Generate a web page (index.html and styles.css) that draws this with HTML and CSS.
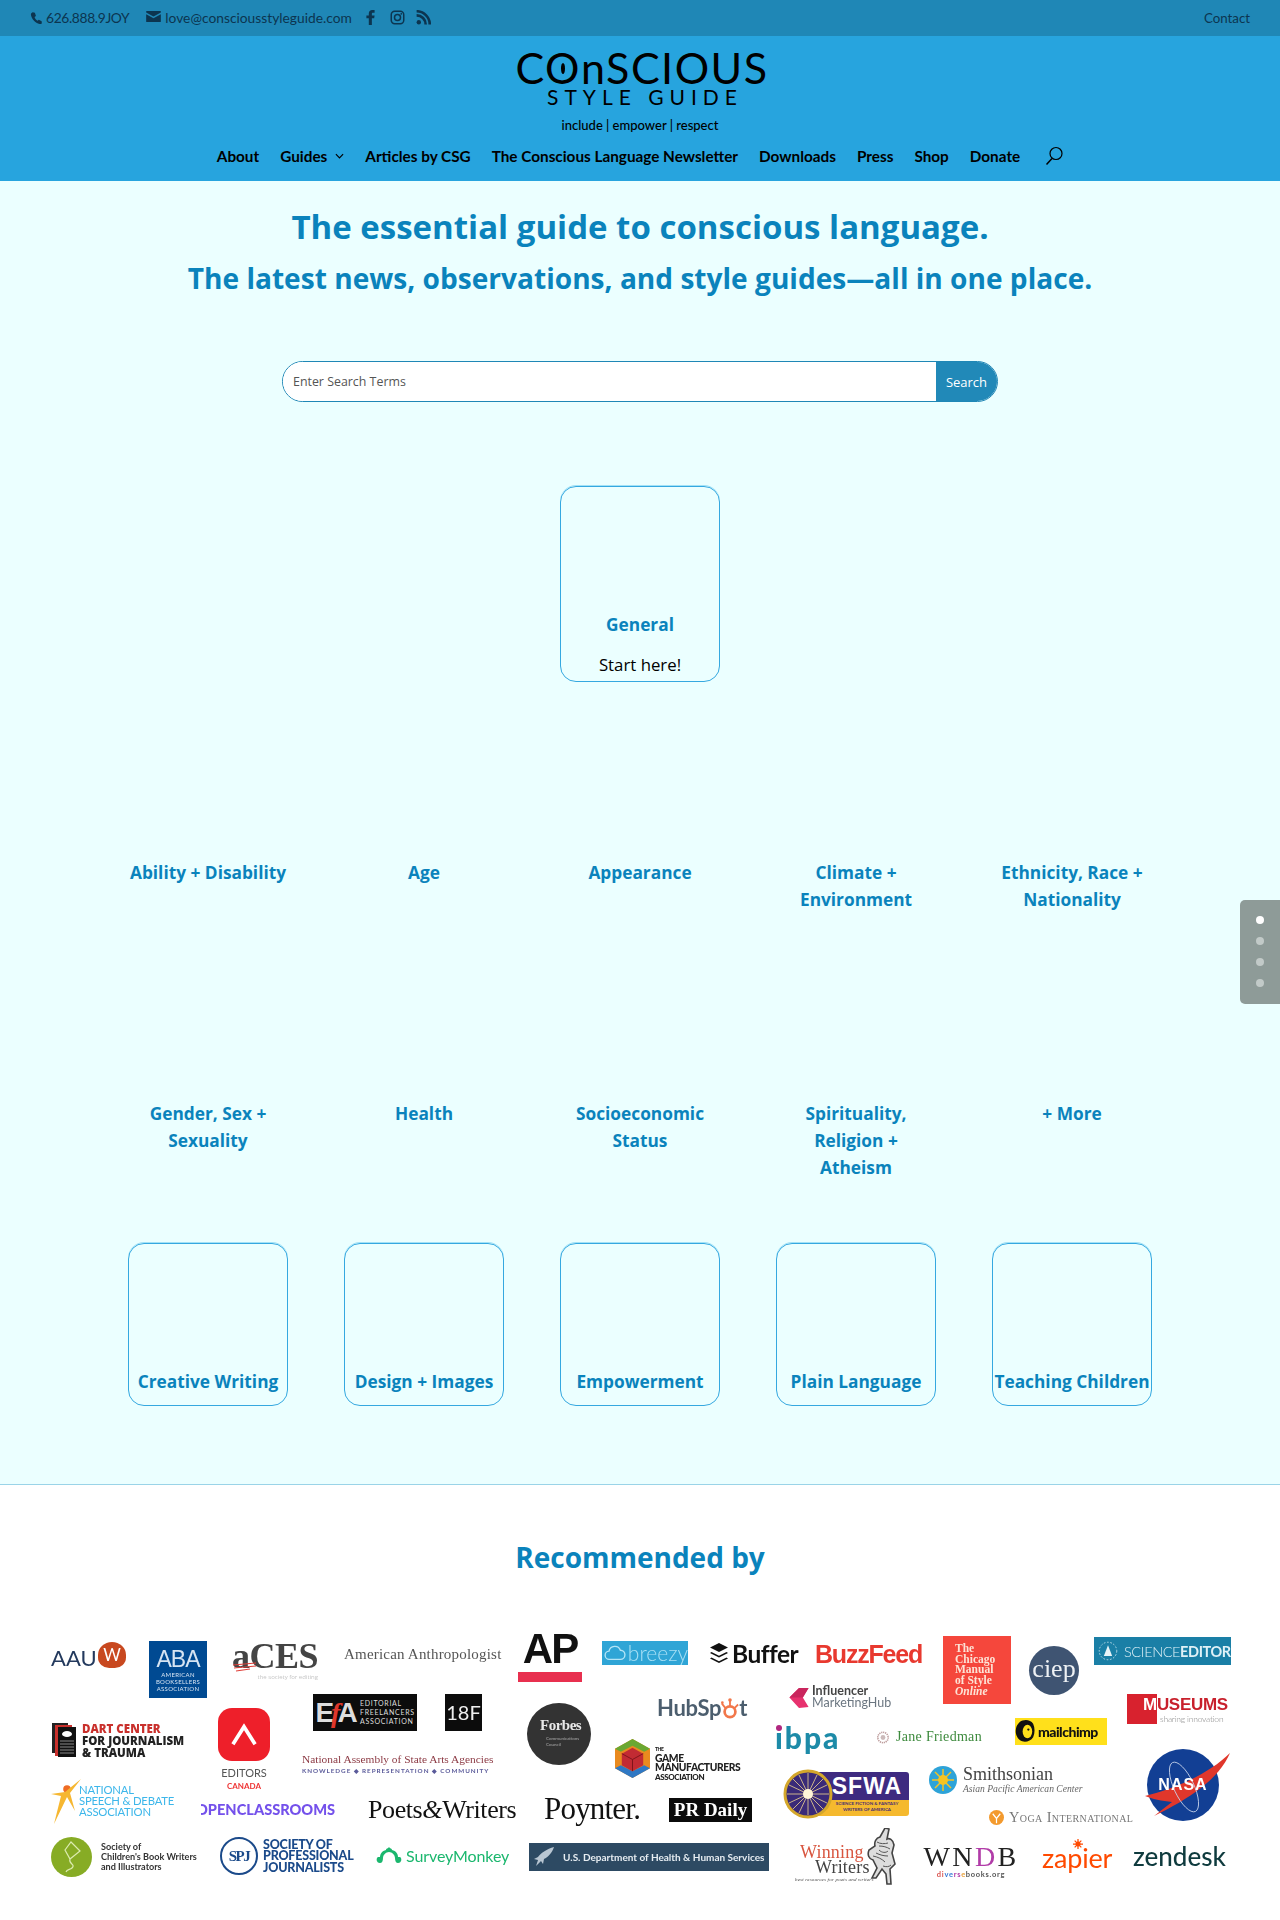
FILE: index.html
```html
<!DOCTYPE html>
<html>
<head>
	<title>Conscious Style Guide</title>
	<link rel="stylesheet" href="styles.css">
</head>
<body>

	<div class="topbar">
		<div class="topbar-left">
			<span class="contact-item contact-phone">
				<svg class="icon-phone" viewBox="0 0 24 24"><path d="M5 1.5l4 .6 2 6-2.600 2.200c1 3 2.800 5.300 5.400 7l2.500-2.200 5.200 2.900.4 3.800c-1 1.400-2.500 1.700-4 1.400C9.500 21 2.800 13.500 1.700 6 1.500 4 2.800 2.300 5 1.500z"/></svg>626.888.9JOY
			</span>
			<span class="contact-item">
				<svg class="icon-mail" viewBox="0 0 24 18"><path d="M1 0h22c.6 0 1 .4 1 1v1.500L12 9 0 2.500V1c0-.6.4-1 1-1z"/><path d="M0 5.500L12 12l12-6.500V17c0 .6-.4 1-1 1H1c-.6 0-1-.4-1-1z"/></svg>love@consciousstyleguide.com
			</span>
			<svg class="social social-fb" viewBox="0 0 12 22"><path d="M3.500 22V12H0V8h3.500V5.200C3.500 1.800 5.500 0 8.500 0H12v4H9.500C8.300 4 8 4.600 8 5.600V8h4l-.6 4H8v10z"/></svg>
			<svg class="social" viewBox="0 0 24 24"><rect x="2" y="2" width="20" height="20" rx="5.500" fill="none" stroke="#0c3550" stroke-width="2.400"/><circle cx="12" cy="12" r="4.800" fill="none" stroke="#0c3550" stroke-width="2.400"/><circle cx="18" cy="6" r="1.400" fill="#0c3550"/></svg>
			<svg class="social" viewBox="0 0 24 24"><circle cx="4.500" cy="19.500" r="3.500" fill="#0c3550"/><path d="M1 8.500c8 0 14.500 6.500 14.500 14.500M1 2c11.500 0 21 9.500 21 21" fill="none" stroke="#0c3550" stroke-width="4.200"/></svg>
		</div>
		<a class="topbar-link">Contact</a>
	</div>

	<header class="site-header">
		<div class="brand">
			<div class="brand-name">C<span class="eye-o">O</span>nSCIOUS</div>
			<div class="brand-sub">STYLE GUIDE</div>
			<div class="brand-tag">include | empower | respect</div>
		</div>
		<nav class="menu">
			<a>About</a>
			<a class="has-sub">Guides<svg class="chevron" viewBox="0 0 10 6"><path d="M1 1l4 4 4-4" fill="none" stroke="#000" stroke-width="1.300"/></svg></a>
			<a>Articles by CSG</a>
			<a>The Conscious Language Newsletter</a>
			<a>Downloads</a>
			<a>Press</a>
			<a>Shop</a>
			<a>Donate</a>
			<svg class="search-icon" viewBox="0 0 18 20"><circle cx="11" cy="7.500" r="6" fill="none" stroke="#000" stroke-width="1.200"/><path d="M7 12.500L1.500 18.500" stroke="#000" stroke-width="1.500"/></svg>
		</nav>
	</header>

	<main class="guide">
		<h1>The essential guide to conscious language.</h1>
		<h2>The latest news, observations, and style guides—all in one place.</h2>

		<form class="search">
			<input class="search-input" type="text" placeholder="Enter Search Terms">
			<button class="search-button" type="button">Search</button>
		</form>

		<div class="card card-general">
			<div class="topic-name">General</div>
			<div class="card-note">Start here!</div>
		</div>

		<div class="topics">
			<div class="topic"><div class="topic-name">Ability + Disability</div></div>
			<div class="topic"><div class="topic-name">Age</div></div>
			<div class="topic"><div class="topic-name">Appearance</div></div>
			<div class="topic"><div class="topic-name">Climate + Environment</div></div>
			<div class="topic"><div class="topic-name">Ethnicity, Race + Nationality</div></div>
			<div class="topic"><div class="topic-name">Gender, Sex + Sexuality</div></div>
			<div class="topic"><div class="topic-name">Health</div></div>
			<div class="topic"><div class="topic-name">Socioeconomic Status</div></div>
			<div class="topic"><div class="topic-name">Spirituality,<br>Religion +<br>Atheism</div></div>
			<div class="topic"><div class="topic-name">+ More</div></div>
		</div>

		<div class="cards">
			<div class="card"><div class="topic-name">Creative Writing</div></div>
			<div class="card"><div class="topic-name">Design + Images</div></div>
			<div class="card"><div class="topic-name">Empowerment</div></div>
			<div class="card"><div class="topic-name">Plain Language</div></div>
			<div class="card"><div class="topic-name">Teaching Children</div></div>
		</div>
	</main>

	<section class="recommended">
		<h3>Recommended by</h3>

		<div class="logo-wall">
			<!-- row 1 -->
			<div class="logo aauw">AAU<span class="aauw-w">W</span></div>
			<div class="logo aba"><b>ABA</b><small>AMERICAN<br>BOOKSELLERS<br>ASSOCIATION</small></div>
			<div class="logo aces">aCES
				<svg class="aces-scribble" viewBox="0 0 26 10" width="26" height="10"><path d="M1 3l23-2M2 6l22-2M4 9l14-2" stroke="#e0403a" stroke-width="1.200"/></svg>
				<small>the society for editing</small>
			</div>
			<div class="logo anthro">American Anthropologist</div>
			<div class="logo ap">AP<i></i></div>
			<div class="logo breezy">
				<svg viewBox="0 0 24 18" width="24" height="18"><path d="M6 16a4.500 4.500 0 0 1-.5-9A6.500 6.500 0 0 1 18 6a5 5 0 0 1 0 10z" fill="none" stroke="#b5e5f7" stroke-width="1.500"/></svg>breezy
			</div>
			<div class="logo buffer">
				<svg viewBox="0 0 20 22" width="20" height="22"><path d="M10 0l9 4.500-9 4.500-9-4.500zM2.500 9l7.500 3.700L17.500 9l1.500.9-9 4.500-9-4.500zM2.500 14.500l7.500 3.700 7.500-3.700 1.500.9-9 4.500-9-4.500z" fill="#111"/></svg>Buffer
			</div>
			<div class="logo buzzfeed">BuzzFeed</div>
			<div class="logo chicago">The<br>Chicago<br>Manual<br>of Style<br><em>Online</em></div>
			<div class="logo ciep">ciep</div>
			<div class="logo science">
				<svg viewBox="0 0 24 24" width="20" height="20"><circle cx="12" cy="12" r="10.500" fill="none" stroke="#cfe8f2" stroke-dasharray="2 2"/><path d="M12 5l5 13H7z" fill="#e8f4f8"/></svg>SCIENCE<b>EDITOR</b>
			</div>

			<!-- row 2 -->
			<div class="logo dart">
				<svg viewBox="0 0 24 34" width="24" height="34"><rect width="16" height="30" fill="#222"/><rect x="3" y="2" width="17" height="31" fill="#c9302c"/><rect x="6" y="4" width="18" height="30" fill="#111"/><ellipse cx="15" cy="11" rx="5" ry="3" fill="#fff"/><path d="M8 18h14M8 21h14M8 24h14M8 27h14M8 30h14" stroke="#888"/></svg>
				<div><span class="dart-red">DART CENTER</span><br>FOR JOURNALISM<br>&amp; TRAUMA</div>
			</div>
			<div class="logo editors">
				<div class="editors-mark"><svg viewBox="0 0 30 26" width="28" height="24"><path d="M3 23L15 4l12 19" fill="none" stroke="#fff" stroke-width="4"/></svg></div>
				<div class="editors-name">EDITORS</div>
				<div class="editors-ca">CANADA</div>
			</div>
			<div class="logo efa"><span class="efa-mark">E<em>f</em>A</span><span class="efa-text">EDITORIAL<br>FREELANCERS<br>ASSOCIATION</span></div>
			<div class="logo eighteen">18F</div>
			<div class="logo nasaa">National Assembly of State Arts Agencies<small>KNOWLEDGE ◆ REPRESENTATION ◆ COMMUNITY</small></div>
			<div class="logo forbes"><b>Forbes</b><small>Communications<br>Council</small></div>
			<div class="logo gamecube"><svg viewBox="0 0 36 40" width="35" height="39"><path d="M18 0l18 10v20L18 40 0 30V10z" fill="#e98a1f"/><path d="M18 0l18 10-6 3-12-6-12 6-6-3z" fill="#6aa832"/><path d="M0 30l6-3 12 6 12-6 6 3-18 10z" fill="#2f78c4"/><path d="M18 9l11 6v12l-11 6-11-6V15z" fill="#c22b33"/><path d="M18 21l11-6M18 21L7 15M18 21v12" stroke="#7d151b"/></svg></div>
			<div class="logo game"><small>THE</small><br>GAME<br>MANUFACTURERS<br><span>ASSOCIATION</span></div>
			<div class="logo hubspot">HubSp<span class="hub-o"><svg viewBox="0 0 20 26" width="18" height="24"><circle cx="10" cy="16" r="6" fill="none" stroke="#f2774a" stroke-width="3"/><path d="M10 10V4M15 12l4-4M5 12L1 7" stroke="#f2774a" stroke-width="2"/><circle cx="10" cy="3" r="2" fill="#f2774a"/><circle cx="1.500" cy="6" r="1.500" fill="#f2774a"/></svg></span>t</div>
			<div class="logo influencer">
				<svg viewBox="0 0 20 24" width="20" height="23"><path d="M0 12L10 2h10l-6 10 6 10-10 1z" fill="#e7326e"/><path d="M10 2h10l-6 10H0z" fill="#c9265d"/></svg>
				<div><b>Influencer</b><br>MarketingHub</div>
			</div>
			<div class="logo ibpa"><span class="ibpa-dot"></span>ıbpa</div>
			<div class="logo jane">
				<svg viewBox="0 0 20 20" width="16" height="17"><circle cx="10" cy="10" r="6.500" fill="none" stroke="#b99" stroke-width="2" stroke-dasharray="1.500 1"/><circle cx="10" cy="10" r="3" fill="#cbb"/></svg>Jane Friedman
			</div>
			<div class="logo mailchimp">
				<svg viewBox="0 0 22 26" width="21" height="25"><path d="M5 3c4-3 11-3 14 2 2 4 2 10 0 14-3 5-10 6-14 3C2 19 0 15 1 10c.4-3 2-5 4-7z" fill="#111"/><ellipse cx="13" cy="13" rx="5" ry="7" fill="#ffe01b"/><circle cx="14" cy="11" r="1.200" fill="#111"/></svg>mailchimp
			</div>
			<div class="logo museums"><div class="museums-box"></div><div class="museums-text"><span class="museums-m">M</span>USEUMS<small>sharing innovation</small></div></div>

			<!-- row 3 -->
			<div class="logo nsda">
				<svg viewBox="0 0 30 46" width="30" height="46"><circle cx="16" cy="10" r="3.800" fill="#ef6c24"/><path d="M30 0L19 14l5 18-8-14-13 27 7-28L0 15l14-2z" fill="#f6b731"/></svg>
				<div>NATIONAL<br>SPEECH &amp; DEBATE<br>ASSOCIATION</div>
			</div>
			<div class="logo openclass">OPENCLASSROOMS</div>
			<div class="logo poets">Poets<em>&amp;</em>Writers</div>
			<div class="logo poynter">Poynter.</div>
			<div class="logo prdaily">PR Daily</div>
			<div class="logo sfwa">
				<div class="sfwa-seal"><svg viewBox="0 0 50 50" width="50" height="50"><circle cx="25" cy="25" r="23" fill="#3a2a78" stroke="#d4a72c" stroke-width="3"/><path d="M25 4v42M4 25h42M10 10l30 30M40 10L10 40M16 6l18 38M34 6L16 44M6 16l38 18M44 16L6 34" stroke="#f0d590" stroke-width=".8"/><circle cx="25" cy="25" r="5" fill="#fff6d8"/></svg></div>
				<div class="sfwa-body"><div class="sfwa-name">SFWA</div><div class="sfwa-sub">SCIENCE FICTION &amp; FANTASY<br>WRITERS OF AMERICA</div></div>
			</div>
			<div class="logo smithsonian">
				<svg viewBox="0 0 28 28" width="28" height="28"><circle cx="14" cy="14" r="14" fill="#2ea3d8"/><circle cx="14" cy="14" r="5" fill="#f6c322"/><path d="M14 3v22M3 14h22M6 6l16 16M22 6L6 22" stroke="#f6c322" stroke-width="1.500"/></svg>
				<div><span class="smith-name">Smithsonian</span><br><em>Asian Pacific American Center</em></div>
			</div>
			<div class="logo yoga">
				<svg viewBox="0 0 16 16" width="15" height="15"><circle cx="8" cy="8" r="8" fill="#f39a2e"/><path d="M4 4l4 5 4-5M8 9v5" stroke="#fff" stroke-width="1.300" fill="none"/></svg><span>Yoga International</span>
			</div>
			<div class="logo nasa">
				<svg class="nasa-art" viewBox="0 0 87 73" width="87" height="73"><ellipse cx="39" cy="36" rx="36" ry="36" fill="#123f94"/><path d="M1 47C30 40 65 25 86 4 75 30 45 50 10 67l18-14C18 52 8 50 1 47z" fill="#e0372b"/><ellipse cx="40" cy="38" rx="10" ry="27" transform="rotate(-25 40 38)" fill="none" stroke="#c9d5ec" stroke-width=".8"/></svg>
				<span>NASA</span>
			</div>

			<!-- row 4 -->
			<div class="logo scbwi">
				<div class="scbwi-mark"><svg viewBox="0 0 40 40" width="40" height="40"><path d="M20 5l9 9-10 8-5-9zM19 22c-2 5 6 5 2 9-2 2-5 1-6 4" fill="none" stroke="#dcebb0" stroke-width="1.200"/></svg></div>
				<div>Society of<br>Children's Book Writers<br>and Illustrators</div>
			</div>
			<div class="logo spj"><div class="spj-seal">SPJ</div><div class="spj-text">SOCIETY OF<br>PROFESSIONAL<br>JOURNALISTS</div></div>
			<div class="logo survey">
				<svg viewBox="0 0 26 18" width="26" height="18"><path d="M13 0c1 2 3 1 3 3 4 1 6 4 6 7h2c2 1 2 6-2 6-2 0-3-2-3-5 0-3-3-6-6-6s-6 3-6 6c0 3-1 5-3 5-4 0-4-5-2-6h2c0-3 2-6 6-7 0-2 2-1 3-3z" fill="#1bb76e"/></svg>SurveyMonkey
			</div>
			<div class="logo hhs">
				<svg viewBox="0 0 22 22" width="22" height="22"><path d="M21 1C14 3 8 7 5 11l-4 2 4 1-2 6 5-5 2 3 1-5C15 11 19 7 21 1z" fill="#b9c6d2"/></svg>U.S. Department of Health &amp; Human Services
			</div>
			<div class="logo winning">
				<div class="winning-text"><span class="winning-red">Winning</span><br><span class="winning-dark">Writers</span><small>best resources for poets and writers</small></div>
				<svg viewBox="0 0 40 58" width="40" height="58"><path d="M26 0l-5 9c-4 1-6 5-5 9l-6 4c-2 5 0 9 4 10l4 8-5 10h4l6-9 4 5 1 10h4l-1-15 5-5-3-11 2-8c-1-6-5-7-7-6l2-10z" fill="#ddd" stroke="#444" stroke-width="1.600"/><path d="M18 14c3 2 8 2 11 1M20 22c3 3 7 3 9 1M14 28c5 1 9 3 12 6M24 38c3 1 6 1 8-1M20 18c4 0 8 1 11 3M17 25c4 2 8 3 12 3" stroke="#555" fill="none"/></svg>
			</div>
			<div class="logo wndb">
				<div class="wndb-name">WN<span>D</span>B</div>
				<div class="wndb-url"><span class="c1">di</span><span class="c2">ve</span><span class="c3">rs</span><span class="c4">e</span>books.org</div>
			</div>
			<div class="logo zapier">
				<svg class="zap-star" viewBox="0 0 12 12" width="10" height="10"><circle cx="6" cy="6" r="3" fill="#ff4a00"/><path d="M6 0v12M0 6h12M2 2l8 8M10 2l-8 8" stroke="#ff4a00" stroke-width="1.500"/></svg>zapier
			</div>
			<div class="logo zendesk">zendesk</div>
		</div>
	</section>

	<div class="dots">
		<span class="dot dot-active"></span>
		<span class="dot"></span>
		<span class="dot"></span>
		<span class="dot"></span>
	</div>

</body>
</html>
```

FILE: styles.css
```css
body{
	margin: 0;
	height: 1920px;
	overflow: hidden;
	position: relative;
	background: #fff;
	font-family: "Open Sans", sans-serif;
}

h1, h2, h3{
	margin: 0;
	text-align: center;
	font-weight: 700;
	color: #0a83bc;
}

/* top strip */
.topbar{
	height: 36px;
	box-sizing: border-box;
	padding: 0 30px;
	background: #1f87b6;
	color: #0c3550;
	font: 13.8px/36px Lato, sans-serif;
	display: flex;
	justify-content: space-between;
	align-items: center;
}

.topbar-left{
	display: flex;
	align-items: center;
}

.contact-item{
	display: flex;
	align-items: center;
	margin-right: 14px;
}

.contact-phone{
	letter-spacing: -.35px;
	margin-right: 17px;
}

.contact-item svg{
	fill: #0c3550;
}

.icon-phone{
	width: 13px;
	height: 14px;
	margin-right: 3px;
}

.icon-mail{
	width: 15px;
	height: 11px;
	margin-right: 4px;
	margin-top: -4px;
}

.social{
	width: 15px;
	height: 15px;
	margin-right: 11px;
	margin-top: -2px;
}

.social-fb{
	width: 9px;
	fill: #0c3550;
	margin-right: 15px;
}

.topbar-link{
	font-size: 13.3px;
}

/* blue header */
.site-header{
	height: 145px;
	background: #27a4de;
	color: #000;
}

.brand{
	height: 108px;
	text-align: center;
	overflow: hidden;
}

.brand-name{
	font: 400 43px/40px Lato, sans-serif;
	letter-spacing: 1.5px;
	padding-top: 12px;
	margin-left: 4px;
}

.eye-o{
	position: relative;
}

.eye-o::after{
	content: "";
	position: absolute;
	left: 50%;
	top: 50%;
	width: 4px;
	height: 11px;
	margin: -5px 0 0 -2px;
	border-radius: 50%;
	background: #000;
}

.brand-sub{
	font: 400 21px/18px Lato, sans-serif;
	letter-spacing: 6px;
	padding-left: 10px;
}

.brand-tag{
	font: 500 13px/16px Lato, sans-serif;
	margin-top: 11px;
}

.menu{
	display: flex;
	justify-content: center;
	align-items: center;
	gap: 21px;
	font: 700 15.3px/24px Lato, sans-serif;
}

.has-sub{
	display: flex;
	align-items: center;
}

.chevron{
	width: 9px;
	height: 6px;
	margin-left: 8px;
}

.search-icon{
	width: 18px;
	height: 20px;
	margin-left: 4px;
}

/* guides */
.guide{
	background: #ebffff;
	padding: 23px 0 78px;
	border-bottom: 1px solid #9ad4e8;
}

.guide h1{
	font-size: 33px;
	line-height: 46px;
}

.guide h2{
	font-size: 28.1px;
	line-height: 40px;
	margin-top: 8px;
}

.search{
	width: 716px;
	height: 41px;
	margin: 63px auto 0;
	display: flex;
	box-sizing: border-box;
	border: 1px solid #1f87b6;
	border-radius: 21px;
	overflow: hidden;
	background: #fff;
}

.search-input{
	flex: 1;
	border: 0;
	padding: 0 10px;
	outline: 0;
	font: 12.4px "Open Sans", sans-serif;
	background: #fff;
}

.search-input::placeholder{
	color: #555;
}

.search-button{
	width: 61px;
	border: 0;
	padding: 0;
	background: #2189b8;
	color: #fff;
	font: 13px "Open Sans", sans-serif;
}

.card{
	width: 160px;
	box-sizing: border-box;
	height: 163px;
	padding: 0 0 6px;
	border: 1px solid #35a8e0;
	border-radius: 16px;
	box-shadow: 0 -1px 0 #a3e2f6;
	display: flex;
	flex-direction: column;
	justify-content: flex-end;
}

.card-general{
	height: 196px;
	margin: 84px auto 0;
	padding-bottom: 3px;
}

.card-note{
	text-align: center;
	font-size: 16.8px;
	line-height: 27px;
	margin-top: 13px;
	color: #000;
}

.topic-name{
	text-align: center;
	font-size: 17.3px;
	font-weight: 700;
	line-height: 27px;
	color: #0a83bc;
}

.card .topic-name{
	margin-bottom: 4px;
	white-space: nowrap;
}

.card-general .topic-name{
	margin-bottom: 0;
}

.topics{
	display: grid;
	grid-template-columns: repeat(5, 160px);
	justify-content: center;
	column-gap: 56px;
	row-gap: 10px;
}

.topic{
	padding-top: 177px;
}

.cards{
	display: grid;
	grid-template-columns: repeat(5, 160px);
	justify-content: center;
	column-gap: 56px;
	margin-top: 62px;
}

/* logos: one collage, every logo keeps its own spot */
.recommended{
	padding-top: 52px;
}

.recommended h3{
	font-size: 28px;
	line-height: 40px;
}

.logo-wall{
	position: relative;
	height: 300px;
	margin-top: 44px;
	filter: blur(.4px);
}

.logo{
	position: absolute;
	white-space: nowrap;
	font-family: Lato, sans-serif;
}

.aauw{
	left: 51px;
	top: 21px;
	width: 76px;
	height: 26px;
	font-size: 22px;
	line-height: 32px;
	color: #23395d;
}

.aauw-w{
	position: absolute;
	left: 47px;
	top: 0;
	width: 28px;
	height: 26px;
	border-radius: 50% 50% 40% 40%;
	background: #c8481f;
	color: #fff;
	font-size: 17px;
	line-height: 26px;
	text-align: center;
}

.aba{
	left: 149px;
	top: 20px;
	width: 58px;
	height: 57px;
	background: #004a92;
	color: #d6e4f2;
	text-align: center;
}

.aba b{
	display: block;
	font: 400 23px/24px "Liberation Sans", sans-serif;
	margin-top: 6px;
	letter-spacing: -1px;
}

.aba small{
	display: block;
	font-size: 6px;
	line-height: 7px;
	letter-spacing: .3px;
}

.aces{
	left: 232px;
	top: 18px;
	width: 86px;
	font: 700 36px/34px "Liberation Serif", serif;
	color: #444;
	letter-spacing: -.5px;
}

.aces-scribble{
	position: absolute;
	left: 0;
	top: 23px;
}

.aces small{
	display: block;
	font: 6px/8px "Open Sans", sans-serif;
	color: #c5c5c5;
	text-align: right;
	letter-spacing: 0;
}

.anthro{
	left: 344px;
	top: 24px;
	font: 15px/18px "Liberation Serif", serif;
	letter-spacing: .2px;
	color: #555;
}

.ap{
	left: 518px;
	top: 9px;
	width: 64px;
	height: 50px;
	font: 700 42px/38px "Liberation Sans", sans-serif;
	letter-spacing: -2px;
	text-align: center;
	color: #111;
}

.ap i{
	position: absolute;
	left: 0;
	top: 42px;
	width: 64px;
	height: 10px;
	background: #e8304f;
}

.breezy{
	left: 602px;
	top: 20px;
	width: 86px;
	height: 24px;
	background: #2fa5d6;
	color: #a9e0f5;
	font-size: 21px;
	font-weight: 300;
	line-height: 22px;
	display: flex;
	align-items: center;
	gap: 2px;
	padding-left: 2px;
	box-sizing: border-box;
}

.buffer{
	left: 709px;
	top: 21px;
	display: flex;
	align-items: center;
	gap: 3px;
	font-size: 24.5px;
	font-weight: 700;
	line-height: 24px;
	color: #111;
	letter-spacing: -.5px;
}

.buzzfeed{
	left: 815px;
	top: 20px;
	font: 700 25px/26px "Liberation Sans", sans-serif;
	letter-spacing: -1.2px;
	color: #e8392f;
}

.chicago{
	left: 943px;
	top: 15px;
	width: 68px;
	height: 68px;
	box-sizing: border-box;
	padding: 7px 0 0 12px;
	background: #f5473c;
	color: #fde3d6;
	font: 700 11.5px/10.7px "Liberation Serif", serif;
}

.ciep{
	left: 1029px;
	top: 25px;
	width: 50px;
	height: 49px;
	border-radius: 50%;
	background: #3f5472;
	color: #eef1f4;
	font: 26px/46px "Liberation Serif", serif;
	text-align: center;
}

.science{
	left: 1094px;
	top: 16px;
	width: 137px;
	height: 28px;
	box-sizing: border-box;
	padding-left: 4px;
	display: flex;
	align-items: center;
	gap: 6px;
	background: #1a7fa6;
	color: #dff1f7;
	font-size: 14.5px;
	font-weight: 300;
	letter-spacing: -.4px;
}

.science b{
	margin-left: -6px;
	font-weight: 700;
}

.dart{
	left: 52px;
	top: 102px;
	display: flex;
	gap: 6px;
	font: 800 11.5px/12px "Open Sans", sans-serif;
	color: #222;
}

.dart-red{
	color: #c9302c;
}

.editors{
	left: 218px;
	top: 87px;
	width: 52px;
	text-align: center;
}

.editors-mark{
	height: 53px;
	border-radius: 14px;
	background: #ee1f2a;
	display: flex;
	align-items: center;
	justify-content: center;
}

.editors-name{
	font-size: 11px;
	line-height: 14px;
	margin-top: 5px;
	color: #555;
}

.editors-ca{
	font-size: 8px;
	font-weight: 700;
	line-height: 10px;
	margin-top: 1px;
	color: #e33;
}

.efa{
	left: 313px;
	top: 73px;
	width: 104px;
	height: 37px;
	display: flex;
	align-items: center;
	background: #0c0c0c;
	color: #ddd;
}

.efa-mark{
	width: 44px;
	font: 700 28px/36px "Liberation Sans", sans-serif;
	letter-spacing: -3px;
	text-align: center;
}

.efa-mark em{
	color: #e0372b;
	font-family: "Liberation Serif", serif;
}

.efa-text{
	font-size: 7px;
	line-height: 9px;
	letter-spacing: .7px;
	margin-left: 3px;
}

.eighteen{
	left: 445px;
	top: 73px;
	width: 37px;
	height: 37px;
	background: #0c0c0c;
	color: #eee;
	font-size: 20px;
	line-height: 37px;
	text-align: center;
}

.nasaa{
	left: 302px;
	top: 131px;
	font: 11.4px/15px "Liberation Serif", serif;
	color: #8c3a44;
}

.nasaa small{
	display: block;
	font: 700 6.3px/8px Lato, sans-serif;
	letter-spacing: .95px;
	color: #5a5a9a;
}

.forbes{
	left: 527px;
	top: 82px;
	width: 64px;
	height: 62px;
	box-sizing: border-box;
	padding: 13px 0 0 13px;
	border-radius: 50%;
	background: #333;
	color: #e8e8e8;
}

.forbes b{
	display: block;
	font: 700 15px/18px "Liberation Serif", serif;
	letter-spacing: -.5px;
}

.forbes small{
	display: block;
	margin: 2px 0 0 6px;
	font-size: 4.5px;
	line-height: 6px;
	color: #aaa;
}

.gamecube{
	left: 615px;
	top: 118px;
	height: 39px;
}

.game{
	left: 655px;
	top: 122px;
	font: 900 10.3px/9px Lato, sans-serif;
	color: #222;
	letter-spacing: -.4px;
}

.game small{
	font-size: 5px;
}

.game span{
	font-size: 8px;
}

.hubspot{
	left: 657px;
	top: 71px;
	font: 700 22px/32px Lato, sans-serif;
	color: #4c5e6e;
	letter-spacing: -.3px;
	display: flex;
	align-items: flex-end;
}

.hub-o{
	height: 25px;
	margin-bottom: 2px;
}

.influencer{
	left: 789px;
	top: 64px;
	display: flex;
	align-items: center;
	gap: 3px;
	font-size: 12.5px;
	line-height: 12px;
	color: #6b7680;
}

.influencer b{
	color: #444;
}

.ibpa{
	left: 775px;
	top: 100px;
	font: 900 30px/32px Lato, sans-serif;
	letter-spacing: 2px;
	color: #1d8ba8;
}

.ibpa-dot{
	position: absolute;
	left: 1px;
	top: 4px;
	width: 6px;
	height: 6px;
	border-radius: 50%;
	background: #b0277f;
}

.jane{
	left: 875px;
	top: 107px;
	display: flex;
	align-items: center;
	gap: 5px;
	font: 14px/18px "Liberation Serif", serif;
	letter-spacing: .3px;
	color: #3d8a3d;
}

.mailchimp{
	left: 1015px;
	top: 97px;
	width: 92px;
	height: 27px;
	display: flex;
	align-items: center;
	gap: 2px;
	background: #ffe01b;
	font-size: 14px;
	font-weight: 900;
	letter-spacing: -.5px;
	color: #111;
}

.museums{
	left: 1127px;
	top: 73px;
	width: 104px;
	height: 31px;
}

.museums-box{
	width: 30px;
	height: 30px;
	background: #d8222e;
}

.museums-text{
	position: absolute;
	left: 16px;
	top: 1px;
	font: 700 17px/19px "Liberation Sans", sans-serif;
	letter-spacing: -.3px;
	color: #c8202c;
}

.museums-m{
	color: #fff;
}

.museums-text small{
	display: block;
	margin-left: 17px;
	font: 300 8.5px/10px Lato, sans-serif;
	color: #888;
	letter-spacing: -.2px;
}

.nsda{
	left: 51px;
	top: 158px;
	display: flex;
	font-size: 11.3px;
	line-height: 11px;
	color: #3cb6ea;
	letter-spacing: -.2px;
}

.nsda div{
	padding-top: 5px;
	margin-left: -2px;
}

.openclass{
	left: 201px;
	top: 181px;
	width: 137px;
	overflow: hidden;
	font-size: 14.6px;
	font-weight: 900;
	line-height: 16px;
	color: #7451eb;
	text-indent: -5px;
}

.poets{
	left: 368px;
	top: 175px;
	font: 26px/28px "Liberation Serif", serif;
	letter-spacing: -.4px;
	color: #111;
}

.poets em{
	font-style: italic;
}

.poynter{
	left: 544px;
	top: 173px;
	font: 31px/30px "Liberation Serif", serif;
	letter-spacing: -.8px;
	color: #111;
}

.prdaily{
	left: 669px;
	top: 177px;
	width: 83px;
	height: 24px;
	background: #0b0b0b;
	color: #fff;
	font: 700 19px/24px "Liberation Serif", serif;
	text-align: center;
}

.sfwa{
	left: 783px;
	top: 148px;
	width: 126px;
	height: 51px;
}

.sfwa-seal{
	position: absolute;
	left: 0;
	top: 0;
	z-index: 1;
}

.sfwa-body{
	position: absolute;
	left: 20px;
	top: 3px;
	width: 106px;
	height: 44px;
	border-radius: 3px;
	background: linear-gradient(#3e2a80 0, #3e2a80 64%, #f5b92e 64%);
	text-align: center;
}

.sfwa-name{
	padding-left: 22px;
	font: 700 23px/29px "Liberation Sans", sans-serif;
	letter-spacing: 1px;
	color: #fff;
}

.sfwa-sub{
	padding-left: 22px;
	font-size: 4.5px;
	font-weight: 700;
	line-height: 6px;
	color: #4a2e70;
}

.smithsonian{
	left: 929px;
	top: 145px;
	display: flex;
	gap: 6px;
	font: 9.6px/12px "Liberation Serif", serif;
	color: #666;
}

.smith-name{
	font-size: 18px;
	line-height: 17px;
	color: #444;
}

.yoga{
	left: 989px;
	top: 189px;
	display: flex;
	align-items: center;
	gap: 5px;
	font: 14.4px/15px "Liberation Serif", serif;
	font-variant: small-caps;
	letter-spacing: .4px;
	color: #777;
}

.nasa{
	left: 1144px;
	top: 128px;
	width: 87px;
	height: 73px;
}

.nasa-art{
	display: block;
}

.nasa span{
	position: absolute;
	left: 8px;
	top: 27px;
	width: 62px;
	text-align: center;
	font: 700 16px/18px "Liberation Sans", sans-serif;
	letter-spacing: 1px;
	color: #fff;
}

.scbwi{
	left: 51px;
	top: 216px;
	display: flex;
	align-items: center;
	gap: 9px;
	font-size: 9.1px;
	font-weight: 700;
	line-height: 10.3px;
	color: #333;
}

.scbwi-mark{
	width: 41px;
	height: 40px;
	border-radius: 50%;
	background: #87ac25;
}

.spj{
	left: 220px;
	top: 216px;
	display: flex;
	align-items: center;
	gap: 5px;
	color: #1b4a8a;
}

.spj-seal{
	width: 34px;
	height: 34px;
	border: 2.5px solid #1b4a8a;
	border-radius: 50%;
	font: 700 15px/34px "Liberation Serif", serif;
	text-align: center;
	letter-spacing: -1.5px;
}

.spj-text{
	font: 900 12.5px/11.5px Lato, sans-serif;
	letter-spacing: -.2px;
}

.survey{
	left: 376px;
	top: 225px;
	display: flex;
	align-items: center;
	gap: 4px;
	font-size: 16px;
	line-height: 20px;
	letter-spacing: -.1px;
	color: #1bb76e;
}

.hhs{
	left: 529px;
	top: 222px;
	width: 240px;
	height: 28px;
	box-sizing: border-box;
	padding-left: 4px;
	display: flex;
	align-items: center;
	gap: 8px;
	background: #2d4a63;
	color: #e6ecf1;
	font-size: 10px;
	font-weight: 700;
}

.winning{
	left: 795px;
	top: 207px;
	width: 104px;
	height: 57px;
}

.winning svg{
	position: absolute;
	right: 0;
	top: 0;
}

.winning-text{
	position: absolute;
	left: 0;
	top: 17px;
	font: 18px/15px "Liberation Serif", serif;
	letter-spacing: .2px;
}

.winning-red{
	margin-left: 5px;
	color: #d8553f;
}

.winning-dark{
	margin-left: 20px;
	color: #444;
}

.winning-text small{
	display: block;
	font: italic 5px/9px "Liberation Serif", serif;
	color: #444;
}

.wndb{
	left: 922px;
	top: 226px;
	width: 98px;
	text-align: center;
}

.wndb-name{
	font: 28px/20px "Liberation Serif", serif;
	letter-spacing: 2.4px;
	color: #222;
}

.wndb-name span{
	color: #b13ca8;
}

.wndb-url{
	margin-top: 4px;
	font-size: 7.5px;
	font-weight: 700;
	line-height: 8px;
	letter-spacing: .7px;
	color: #555;
}

.c1{ color: #d9534f; }
.c2{ color: #3a7bd5; }
.c3{ color: #b13ca8; }
.c4{ color: #e9a23b; }

.zapier{
	left: 1042px;
	top: 221px;
	font: 400 27px/32px Lato, sans-serif;
	letter-spacing: -.2px;
	color: #ff4a00;
}

.zap-star{
	position: absolute;
	left: 31px;
	top: -3px;
}

.zendesk{
	left: 1133px;
	top: 224px;
	font: 500 26px/22px Lato, sans-serif;
	color: #0f3b3e;
}

/* side dots */
.dots{
	position: absolute;
	right: 0;
	top: 900px;
	width: 40px;
	height: 104px;
	box-sizing: border-box;
	padding-top: 16px;
	border-radius: 5px 0 0 5px;
	background: #8e9b98;
	display: flex;
	flex-direction: column;
	align-items: center;
	gap: 13px;
}

.dot{
	width: 8px;
	height: 8px;
	border-radius: 50%;
	background: #c2cac8;
}

.dot-active{
	background: #fff;
}
```
